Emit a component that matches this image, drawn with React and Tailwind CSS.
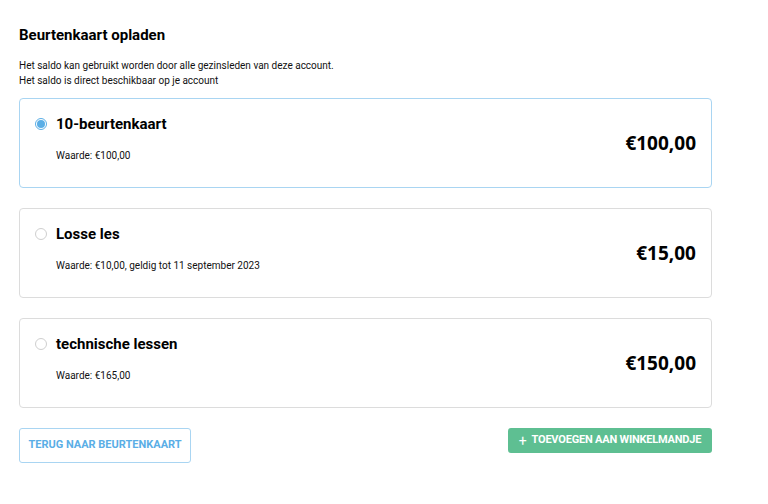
import { useState } from 'react';

const cards = [
  { id: 'tien', title: '10-beurtenkaart', info: 'Waarde: €100,00', price: '€100,00' },
  { id: 'losse', title: 'Losse les', info: 'Waarde: €10,00, geldig tot 11 september 2023', price: '€15,00' },
  { id: 'tech', title: 'technische lessen', info: 'Waarde: €165,00', price: '€150,00' },
];

function Radio({ checked }) {
  if (checked) {
    return (
      <span className="w-[12px] h-[12px] rounded-full border border-[#5aaee6] flex items-center justify-center shrink-0">
        <span className="w-[8px] h-[8px] rounded-full bg-[#5aaee6]" />
      </span>
    );
  }
  return <span className="w-[12px] h-[12px] rounded-full border border-[#cfcfcf] shrink-0" />;
}

export default function App() {
  const [selected, setSelected] = useState('tien');

  return (
    <div className="w-[768px] h-[504px] bg-white text-black font-['Roboto',sans-serif] px-[19px] pt-[26px]">
      <h1 className="text-[15px] leading-[18px] font-bold">Beurtenkaart opladen</h1>
      <p className="mt-[14px] text-[10px] leading-[15px] text-[#111]">
        Het saldo kan gebruikt worden door alle gezinsleden van deze account.
        <br />
        Het saldo is direct beschikbaar op je account
      </p>

      <div className="mt-[10px] w-[693px] flex flex-col gap-[20px]">
        {cards.map(card => {
          const active = selected === card.id;
          return (
            <div
              key={card.id}
              onClick={() => setSelected(card.id)}
              className={`h-[90px] rounded-[4px] border ${active ? 'border-[#a9d5f2]' : 'border-[#dcdcdc]'} flex items-center justify-between pl-[15px] pr-[15px] cursor-pointer`}
            >
              <div className="self-start pt-[15px]">
                <div className="flex items-center gap-[9px]">
                  <Radio checked={active} />
                  <span className="text-[15px] leading-[20px] font-bold">{card.title}</span>
                </div>
                <div className="mt-[15px] pl-[21px] text-[10px] leading-[14px] text-[#111]">{card.info}</div>
              </div>
              <div className="font-['Open_Sans',sans-serif] text-[19px] font-bold">{card.price}</div>
            </div>
          );
        })}
      </div>

      <div className="mt-[20px] w-[693px] flex justify-between items-start">
        <button className="w-[172px] h-[35px] rounded-[3px] border border-[#a9d5f2] text-[#5aaee6] text-[11px] font-bold uppercase">
          Terug naar beurtenkaart
        </button>
        <button className="w-[204px] h-[25px] rounded-[3px] bg-[#5ebf92] text-white text-[11px] font-bold uppercase tracking-[-0.2px] flex items-center justify-center gap-[5px]">
          <span className="text-[14px] font-normal leading-none">+</span>
          Toevoegen aan winkelmandje
        </button>
      </div>
    </div>
  );
}
